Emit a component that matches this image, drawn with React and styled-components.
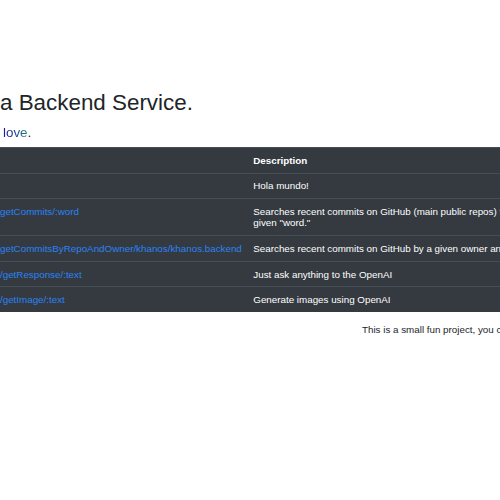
import React from "react";
import styled, { createGlobalStyle } from "styled-components";

const GlobalStyle = createGlobalStyle`
  html, body {
    margin: 0;
    padding: 0;
    overflow: hidden;
    background: #ffffff;
  }
  body {
    font-family: "Liberation Sans", Arial, Helvetica, sans-serif;
    color: #212529;
  }
`;

const Page = styled.main`
  width: 500px;
  padding-top: 89.5px;
`;

const Title = styled.h1`
  margin: 0;
  font-size: 22.4px;
  line-height: 1.2;
  font-weight: 400;
  color: #212529;
  white-space: nowrap;
`;

const Lead = styled.p`
  margin: 6.5px 0 4px 0;
  font-size: 13.4px;
  line-height: 1.5;
  padding-left: 3px;
  color: #212529;
`;

const Love = styled.span`
  background: linear-gradient(90deg, #1d1a96 0%, #25359a 40%, #1c8a78 100%);
  -webkit-background-clip: text;
  background-clip: text;
  color: transparent;
`;

const Table = styled.table`
  width: 700px;
  table-layout: fixed;
  border-collapse: collapse;
  background: #343a40;
  color: #ffffff;
  font-size: 9.8px;
  line-height: 1.15;
`;

const Cell = styled.td`
  padding: 6.7px 7.3px;
  border-top: 1px solid #454d55;
  vertical-align: top;
  text-align: left;
  font-weight: ${(p) => (p.$head ? 700 : 400)};
  &:first-child {
    padding-left: 0;
  }
`;

const EndpointLink = styled.a`
  color: #2a83f5;
  text-decoration: none;
  white-space: nowrap;
`;

const Footer = styled.footer`
  padding: 11px 0 0 362px;
  font-size: 9.8px;
  line-height: 1.5;
  color: #212529;
  white-space: nowrap;
`;

const rows = [
  { path: "", desc: "Hola mundo!" },
  {
    path: "getCommits/:word",
    desc: "Searches recent commits on GitHub (main public repos) that contain the given \"word.\"",
  },
  {
    path: "getCommitsByRepoAndOwner/khanos/khanos.backend",
    desc: "Searches recent commits on GitHub by a given owner and repository.",
  },
  { path: "/getResponse/:text", desc: "Just ask anything to the OpenAI" },
  { path: "/getImage/:text", desc: "Generate images using OpenAI" },
];

export default function App() {
  return (
    <>
      <GlobalStyle />
      <Page>
        <Title>a Backend Service.</Title>
        <Lead>
          <Love>love</Love>.
        </Lead>
        <Table>
          <colgroup>
            <col style={{ width: "246px" }} />
            <col style={{ width: "330px" }} />
            <col />
          </colgroup>
          <thead>
            <tr>
              <Cell as="th" $head></Cell>
              <Cell as="th" $head>Description</Cell>
              <Cell as="th" $head></Cell>
            </tr>
          </thead>
          <tbody>
            {rows.map((r, i) => (
              <tr key={i}>
                <Cell>{r.path && <EndpointLink href="#">{r.path}</EndpointLink>}</Cell>
                <Cell>{r.desc}</Cell>
                <Cell></Cell>
              </tr>
            ))}
          </tbody>
        </Table>
        <Footer>This is a small fun project, you can find the code on GitHub.</Footer>
      </Page>
    </>
  );
}
